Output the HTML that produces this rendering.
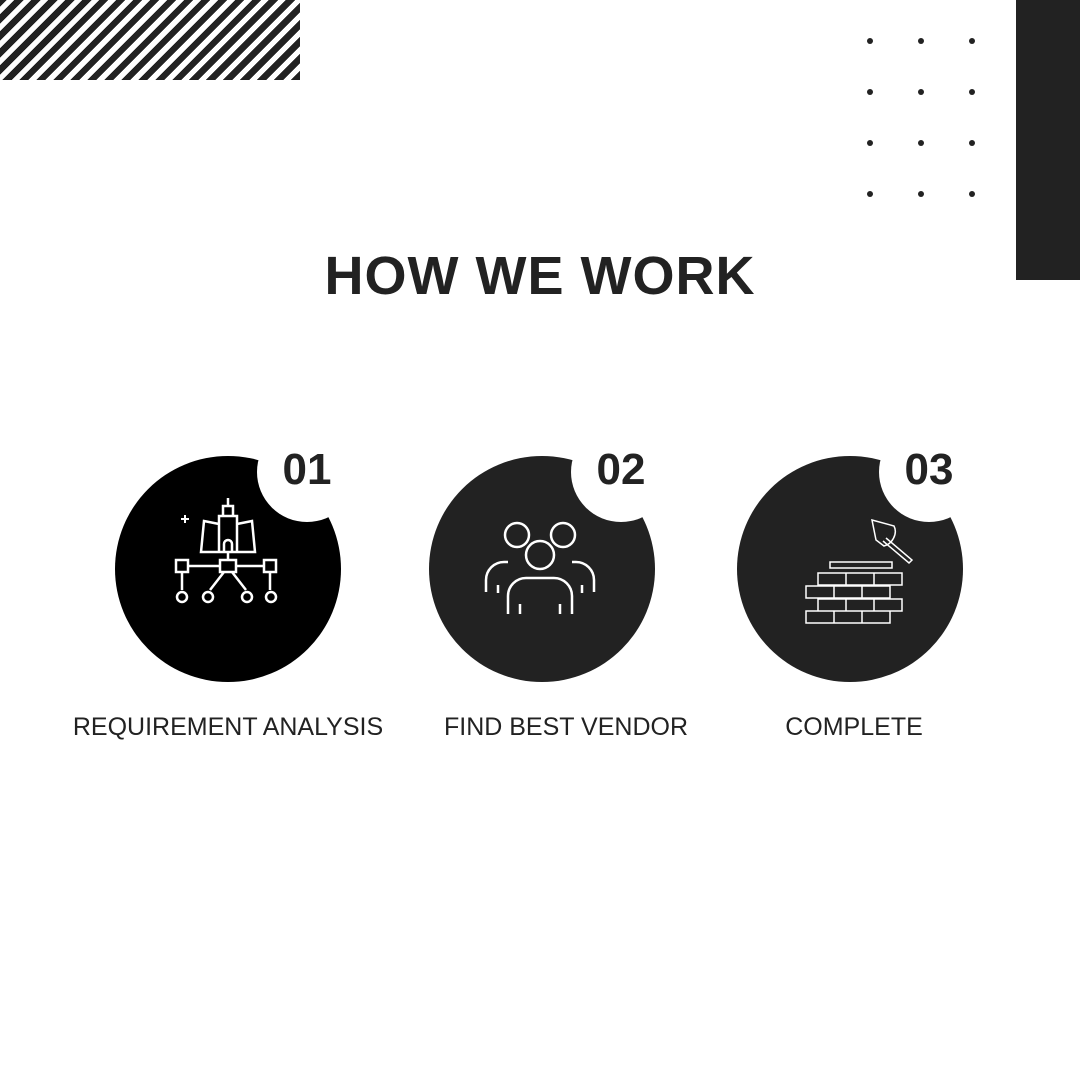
<!DOCTYPE html>
<html><head><style>
body{margin:0;width:1080px;height:1080px;background:#fff;position:relative;overflow:hidden;font-family:"Liberation Sans",sans-serif;color:#222}
.stripes{position:absolute;left:0;top:0;width:300px;height:80px;background:repeating-linear-gradient(-45deg,#222 0 6.5px,#fff 6.5px 12px)}
.bar{position:absolute;left:1016px;top:0;width:64px;height:280px;background:#222}
.dot{position:absolute;width:6px;height:6px;border-radius:50%;background:#222}
h1{position:absolute;top:245px;left:0;width:1080px;text-align:center;margin:0;font-size:54px;font-weight:bold;letter-spacing:1px}
.c{position:absolute;width:226px;height:226px;border-radius:50%}
.n{position:absolute;width:100px;height:100px;border-radius:50%;background:#fff}
.num{position:absolute;width:100px;text-align:center;font-size:44px;font-weight:bold;line-height:44px}
.lbl{position:absolute;top:713px;font-size:25px;text-align:center;width:360px}
svg{position:absolute}
</style></head><body>
<div class="stripes"></div>
<div class="bar"></div>
<div class="dot" style="left:867px;top:38px"></div><div class="dot" style="left:918px;top:38px"></div><div class="dot" style="left:969px;top:38px"></div>
<div class="dot" style="left:867px;top:89px"></div><div class="dot" style="left:918px;top:89px"></div><div class="dot" style="left:969px;top:89px"></div>
<div class="dot" style="left:867px;top:140px"></div><div class="dot" style="left:918px;top:140px"></div><div class="dot" style="left:969px;top:140px"></div>
<div class="dot" style="left:867px;top:191px"></div><div class="dot" style="left:918px;top:191px"></div><div class="dot" style="left:969px;top:191px"></div>
<h1>HOW WE WORK</h1>

<div class="c" style="left:115px;top:456px;background:#000"></div>
<div class="n" style="left:257px;top:422px"></div>
<div class="num" style="left:257px;top:448px">01</div>
<div class="c" style="left:429px;top:456px;background:#222"></div>
<div class="n" style="left:571px;top:422px"></div>
<div class="num" style="left:571px;top:448px">02</div>
<div class="c" style="left:737px;top:456px;background:#222"></div>
<div class="n" style="left:879px;top:422px"></div>
<div class="num" style="left:879px;top:448px">03</div>

<svg width="1080" height="1080" style="left:0;top:0" fill="none" stroke="#fff" stroke-width="2.5">
<path d="M228 498v8M223 506h10v10h-10zM219 516h18v36h-18zM219 524l-15-3-3 31h18M237 524l15-3 3 31h-18M224 552v-8a4 4 0 0 1 8 0v8M228 552v8M176 560h12v12h-12zM220 560h16v12h-16zM264 560h12v12h-12zM188 566h32M236 566h28M182 572v18M270 572v18M224 572l-14 18M232 572l14 18"/>
<circle cx="182" cy="597" r="5"/><circle cx="208" cy="597" r="5"/><circle cx="247" cy="597" r="5"/><circle cx="271" cy="597" r="5"/>
<path d="M185 515v8M181 519h8" stroke-width="2"/>
<circle cx="517" cy="535" r="12"/><circle cx="563" cy="535" r="12"/><circle cx="540" cy="555" r="14"/>
<path d="M486 592v-12a18 18 0 0 1 18-18h4M594 592v-12a18 18 0 0 0-18-18h-4M508 614v-18a18 18 0 0 1 18-18h28a18 18 0 0 1 18 18v18M498 585v8M582 585v8M520 604v10M560 604v10"/>
<g stroke-width="1.5">
<path d="M830 562h62v6h-62zM818 573h84v12h-84zM806 586h84v12h-84zM818 599h84v12h-84zM806 611h84v12h-84zM846 573v12M874 573v12M834 586v12M862 586v12M846 599v12M874 599v12M834 611v12M862 611v12"/>
<path d="M872 520l22 6c4 8-2 18-10 20l-8-6z"/>
<path d="M886 538l26 22-3 3-26-22"/>
</g>
</svg>

<div class="lbl" style="left:48px">REQUIREMENT ANALYSIS</div>
<div class="lbl" style="left:386px">FIND BEST VENDOR</div>
<div class="lbl" style="left:674px">COMPLETE</div>
</body></html>
